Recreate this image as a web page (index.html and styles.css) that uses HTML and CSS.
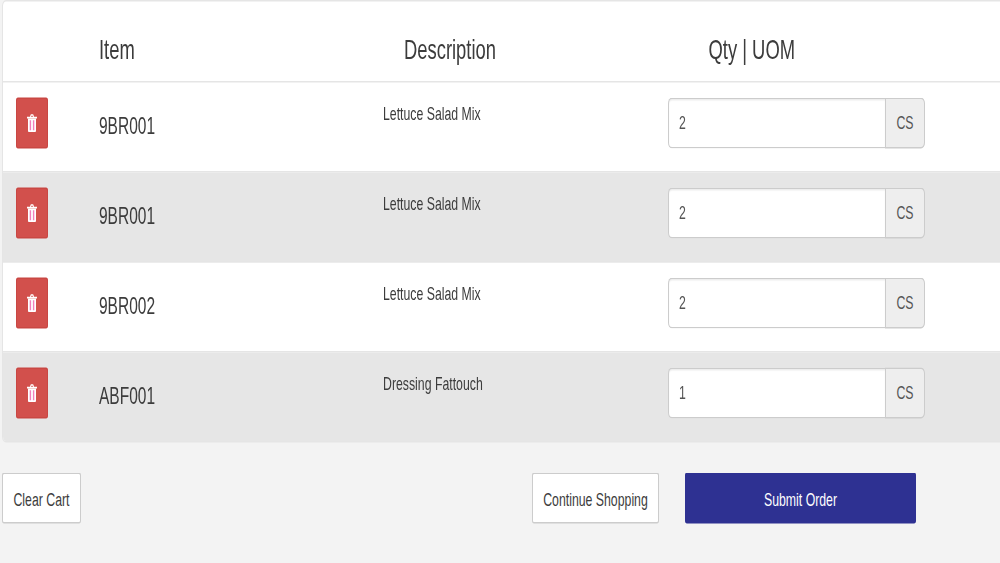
FILE: index.html
```html
<!DOCTYPE html>
<html lang="en">
<head>
<meta charset="utf-8">
<title>Cart</title>
<link rel="stylesheet" href="styles.css">
</head>
<body>
<svg class="defs" width="0" height="0" aria-hidden="true"><symbol id="trash" viewBox="0 0 10 12"><path class="t-body" d="M1 3h8v8.2c0 .5-.3.8-.8.8H1.800c-.5 0-.8-.3-.8-.8z"/><path class="t-body" d="M0 1.900h3l.5-1.200c.1-.3.3-.5.6-.5h1.800c.3 0 .5.2.6.5L7 1.900h3V3H0zM4 1.900h2l-.3-.7H4.300z"/><path class="t-line" d="M3.400 4.200v6.600M6.600 4.200v6.600"/></symbol></svg>
<main class="page">
  <section class="card">
    <header class="grid head">
      <div></div>
      <div class="h-item">Item</div>
      <div class="h-desc">Description</div>
      <div class="h-qty">Qty | UOM</div>
    </header>
    <div class="grid row">
      <button class="del" aria-label="Remove"><svg class="ico"><use href="#trash"/></svg></button>
      <div class="code">9BR001</div>
      <div class="desc">Lettuce Salad Mix</div>
      <div class="group"><input class="qty" value="2"><span class="uom">CS</span></div>
    </div>
    <div class="grid row alt">
      <button class="del" aria-label="Remove"><svg class="ico"><use href="#trash"/></svg></button>
      <div class="code">9BR001</div>
      <div class="desc">Lettuce Salad Mix</div>
      <div class="group"><input class="qty" value="2"><span class="uom">CS</span></div>
    </div>
    <div class="grid row">
      <button class="del" aria-label="Remove"><svg class="ico"><use href="#trash"/></svg></button>
      <div class="code">9BR002</div>
      <div class="desc">Lettuce Salad Mix</div>
      <div class="group"><input class="qty" value="2"><span class="uom">CS</span></div>
    </div>
    <div class="grid row alt">
      <button class="del" aria-label="Remove"><svg class="ico"><use href="#trash"/></svg></button>
      <div class="code">ABF001</div>
      <div class="desc">Dressing Fattouch</div>
      <div class="group"><input class="qty" value="1"><span class="uom">CS</span></div>
    </div>
  </section>
  <footer class="actions">
    <button class="btn clear">Clear Cart</button>
    <button class="btn cont">Continue Shopping</button>
    <button class="btn submit">Submit Order</button>
  </footer>
</main>
</body>
</html>
```
FILE: styles.css
```css
html, body { margin: 0; height: 100%; overflow: hidden; background: #f3f3f3; }
.defs { position: absolute; }
.page {
  width: 1000px; height: 375.33px;
  transform: scaleY(1.5); transform-origin: 0 0;
  font-family: "Liberation Sans", Arial, sans-serif;
  color: #3c3c3c;
}
.card {
  margin: 0 -4px 0 2px;
  background: #fff;
  border: 1px solid #e5e5e5;
  border-radius: 4px;
  height: 294.67px;
  box-sizing: border-box;
  overflow: hidden;
}
.grid { display: grid; grid-template-columns: 96px 284px 285px 1fr; box-sizing: border-box; }
.head { border-bottom: 1px solid #e5e5e5; font-size: 18.4px; line-height: 20px; padding-top: 22.4px; height: 54px; }
.head > div { height: 20px; }
.h-desc { padding-left: 21px; }
.h-qty { padding-left: 40.5px; }
.row { height: 60px; align-items: start; border-bottom: 1px solid #e5e5e5; padding-top: 10.3px; }
.row:last-child { border-bottom: 0; }
.alt { background: #e6e6e6; }
.del {
  margin-left: 13px; width: 32px; height: 34px; padding: 0;
  display: flex; align-items: center; justify-content: center;
  background: #d2504c; border: 1px solid #c94743; border-radius: 2px;
}
.ico { width: 10px; height: 12px; display: block; }
.t-body { fill: #fff; }
.t-line { stroke: #f27fbd; stroke-width: 1.4; fill: none; }
.code { font-size: 15.5px; line-height: 20px; padding-top: 9.1px; }
.desc { font-size: 12.3px; line-height: 16px; padding-top: 2.3px; }
.group { display: flex; width: 257px; height: 34px; }
.qty {
  flex: 1; min-width: 0; box-sizing: border-box; height: 34px; padding: 0 10px;
  font: 12.3px "Liberation Sans", Arial, sans-serif; color: #555;
  background: #fff; border: 1px solid #ccc; border-right: 0;
  border-radius: 4px 0 0 4px; box-shadow: inset 0 1px 1px rgba(0,0,0,.075); outline: 0;
}
.uom {
  width: 40px; box-sizing: border-box; display: flex; align-items: center; justify-content: center;
  font-size: 12.3px; color: #555; background: #eee;
  border: 1px solid #ccc; border-radius: 0 4px 4px 0;
}
.actions { display: flex; padding: 20.7px 84px 0 2px; }
.btn {
  height: 34px; padding: 0.4px 0 0; box-sizing: border-box;
  font: 12.3px "Liberation Sans", Arial, sans-serif; color: #3c3c3c;
  background: #fff; border: 1px solid #ccc; border-radius: 2px;
}
.clear { width: 79px; }
.cont { width: 127px; margin-left: auto; }
.submit { width: 231px; margin-left: 26px; background: #2e3192; border-color: #2e3192; color: #fff; }
```
